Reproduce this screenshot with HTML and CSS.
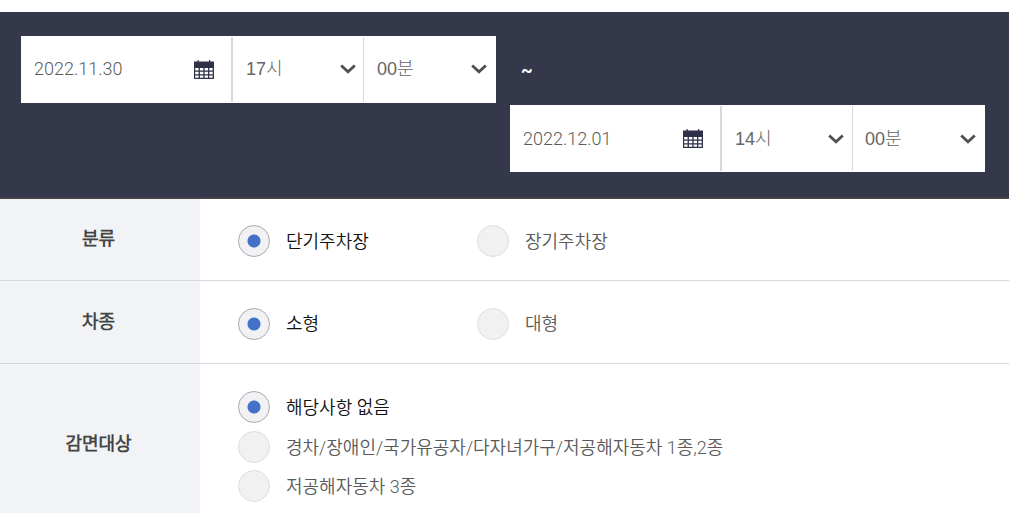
FILE: index.html
```html
<!DOCTYPE html>
<html lang="ko">
<head>
    <meta charset="UTF-8">
    <meta name="viewport" content="width=device-width,initial-scale=1.0">
    <title>주차요금 조회</title>
    <link rel="stylesheet" href="styles.css">
</head>
<body>
    <svg class="defs" width="0" height="0">
        <symbol id="calendar" viewBox="0 0 20 19">
            <path fill="#2e3148" fill-rule="evenodd" d="M3.5 0h1.200v1.500H15V0h1.200v1.500H20V19H0V1.500h3.500zM1.200 8v2.500h3.400V8zm4.700 0v2.500h3.400V8zm4.700 0v2.500h3.400V8zm4.700 0v2.500h3.400V8zM1.200 11.700v2.500h3.400v-2.500zm4.700 0v2.500h3.400v-2.500zm4.700 0v2.500h3.400v-2.500zm4.700 0v2.500h3.400v-2.500zM1.200 15.400v2.300h3.400v-2.300zm4.700 0v2.300h3.400v-2.300zm4.700 0v2.300h3.400v-2.300zm4.700 0v2.300h3.400v-2.300z"/>
        </symbol>
        <symbol id="arrow" viewBox="0 0 16 10">
            <path fill="none" stroke="#505052" stroke-width="2.8" d="M1.2 1.4 8 7.800l6.800-6.400"/>
        </symbol>
    </svg>

    <div class="period">
        <div class="date-group">
            <div class="date">2022.11.30<svg class="calendar"><use href="#calendar"/></svg></div>
            <div class="select hour">17시<svg class="arrow"><use href="#arrow"/></svg></div>
            <div class="select">00분<svg class="arrow"><use href="#arrow"/></svg></div>
        </div>
        <span class="tilde">~</span>
        <div class="date-group end">
            <div class="date">2022.12.01<svg class="calendar"><use href="#calendar"/></svg></div>
            <div class="select hour">14시<svg class="arrow"><use href="#arrow"/></svg></div>
            <div class="select">00분<svg class="arrow"><use href="#arrow"/></svg></div>
        </div>
    </div>

    <div class="row">
        <div class="title">분류</div>
        <div class="options">
            <label class="radio on"><i></i>단기주차장</label>
            <label class="radio"><i></i>장기주차장</label>
        </div>
    </div>
    <div class="row car">
        <div class="title">차종</div>
        <div class="options">
            <label class="radio on"><i></i>소형</label>
            <label class="radio"><i></i>대형</label>
        </div>
    </div>
    <div class="row discount">
        <div class="title">감면대상</div>
        <div class="options list">
            <label class="radio on"><i></i>해당사항 없음</label>
            <label class="radio"><i></i>경차/장애인/국가유공자/다자녀가구/저공해자동차 1종,2종</label>
            <label class="radio"><i></i>저공해자동차 3종</label>
        </div>
    </div>
</body>
</html>
```
FILE: styles.css
```css
* {
    box-sizing: border-box;
}
body {
    margin: 0;
    padding-top: 12px;
    width: 1009px;
    height: 513px;
    overflow: hidden;
    background: #fff;
    font-family: Roboto, "Noto Sans CJK KR DemiLight", "Noto Sans CJK KR", sans-serif;
    font-size: 18px;
    font-weight: 300;
    line-height: 26px;
    color: #5a5a5a;
}
.defs {
    display: block;
}
.period {
    display: flex;
    flex-wrap: wrap;
    align-content: flex-start;
    row-gap: 2px;
    height: 187px;
    padding: 24px 24px 0 21px;
    background: #35374b;
    border-bottom: 2px solid #444447;
}
.date-group {
    display: flex;
    width: 475px;
    height: 67px;
    padding: 1px 0;
    background: #fff;
}
.date-group.end {
    margin-left: auto;
}
.date {
    display: flex;
    align-items: center;
    justify-content: space-between;
    width: 210px;
    padding: 0 17px 1px 13px;
}
.select {
    display: flex;
    align-items: center;
    justify-content: space-between;
    flex: 1;
    padding: 0 9px 1px 13px;
    border-left: 1px solid #d9d9dc;
    color: #666;
    font-family: "Liberation Sans", "Noto Sans CJK KR Light", "Noto Sans CJK KR", sans-serif;
    font-weight: 350;
}
.end .date,
.end .select {
    padding-bottom: 0;
}
.end .select {
    padding-left: 12px;
}
.select.hour {
    flex: 0 0 132px;
    padding-right: 7px;
    padding-left: 13px;
    border-left-width: 2px;
}
.end .select.hour {
    padding-right: 8px;
}
.calendar {
    width: 20px;
    height: 19px;
}
.arrow {
    width: 16px;
    height: 10px;
}
.tilde {
    margin-left: 25px;
    line-height: 67px;
    font-weight: 700;
    color: #fff;
}
.row {
    display: flex;
    height: 82px;
    border-bottom: 1px solid #d5d8dc;
}
.row.car {
    height: 83px;
}
.row.discount {
    height: 162px;
}
.title {
    display: flex;
    align-items: center;
    justify-content: center;
    width: 200px;
    padding: 0 3px 2px 0;
    background: #f1f3f6;
    font-weight: 700;
    color: #444;
}
.car .title {
    padding-bottom: 0;
}
.options {
    display: flex;
    align-items: center;
    padding: 3px 0 0 38px;
}
.options.list {
    flex-direction: column;
    align-items: flex-start;
    justify-content: flex-start;
    gap: 8px;
    padding-top: 27px;
}
.radio {
    display: flex;
    align-items: center;
    width: 239px;
    height: 32px;
    padding-top: 1px;
    white-space: nowrap;
}
.list .radio {
    width: auto;
}
.list .radio:last-child {
    margin-top: -1px;
}
.radio i {
    width: 32px;
    height: 32px;
    margin: -1px 16px 0 0;
    border: 1px solid #dedede;
    border-radius: 50%;
    background: #f1f1f2;
}
.radio.on {
    color: #111;
}
.radio.on i {
    border-color: #aaa9b0;
    background: radial-gradient(circle, #4472cb 6px, #f2f2f4 7px);
}
```
